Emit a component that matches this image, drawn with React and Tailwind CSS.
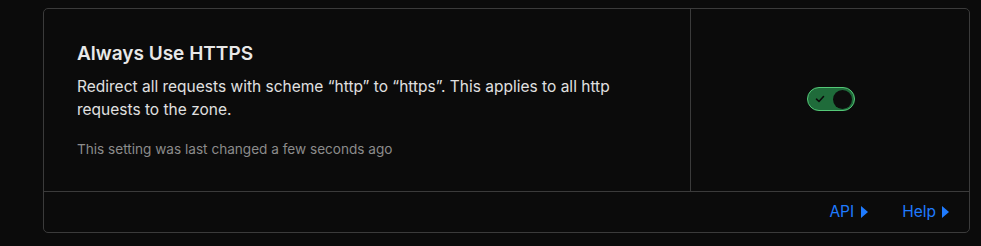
import React from "react";

export default function App() {
  return (
    <div
      className="w-[981px] h-[246px] bg-[#0b0b0b] pt-2 pl-[43px]"
      style={{ fontFamily: "Inter, 'Liberation Sans', sans-serif" }}
    >
      <div className="w-[927px] h-[225px] border border-[#3b3b3b] rounded-[5px] bg-[#0b0b0b] flex flex-col">
        <div className="flex flex-1 border-b border-[#3b3b3b]">
          <div className="w-[647px] border-r border-[#3b3b3b] pl-[33px] pr-[33px] pt-[31px]">
            <h2 className="text-[19px] leading-[28px] font-semibold text-[#e8e8e8]">
              Always Use HTTPS
            </h2>
            <p className="mt-[7px] text-[15.5px] leading-[23px] text-[#e0e0e0]">
              Redirect all requests with scheme “http” to “https”. This applies to all http requests to the zone.
            </p>
            <p className="mt-[18px] text-[13.6px] leading-[20px] text-[#8c8c8c]">
              This setting was last changed a few seconds ago
            </p>
          </div>
          <div className="flex-1 flex justify-center pt-[78px] pl-[2px]">
            <div className="w-[48px] h-[24px] rounded-full bg-[#1f6b3a] border border-[#55c878] flex items-center justify-between pl-[6px] pr-[2px]">
              <svg width="12" height="12" viewBox="0 0 12 12" fill="none">
                <path d="M2.5 6.2 L5 8.5 L9.5 3.5" stroke="#0b0b0b" strokeWidth="1.6" strokeLinecap="round" strokeLinejoin="round" />
              </svg>
              <div className="w-[19px] h-[19px] rounded-full bg-[#0d0d0d]" />
            </div>
          </div>
        </div>
        <div className="h-[40px] flex items-center justify-end gap-[34px] pr-[20px] text-[15.5px] text-[#1f7bff]">
          <a className="flex items-center gap-[7px]">
            API
            <svg width="7" height="12" viewBox="0 0 7 12"><path d="M0 0 L7 6 L0 12 Z" fill="#1f7bff" /></svg>
          </a>
          <a className="flex items-center gap-[6px]">
            Help
            <svg width="7" height="12" viewBox="0 0 7 12"><path d="M0 0 L7 6 L0 12 Z" fill="#1f7bff" /></svg>
          </a>
        </div>
      </div>
    </div>
  );
}
